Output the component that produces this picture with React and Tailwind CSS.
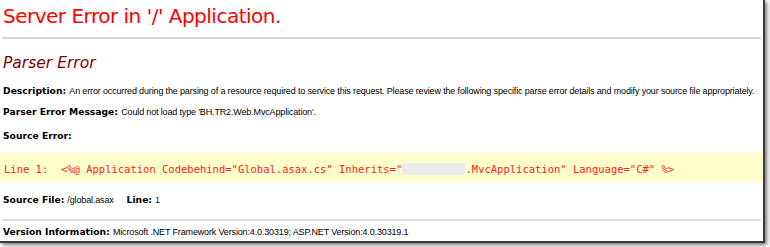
import React from 'react';

const verdana = "font-['DejaVu_Sans',Verdana,sans-serif]";
const arial = "font-['Liberation_Sans',Arial,sans-serif] text-[9px] tracking-[-0.15px]";

const Label = ({ children }) => (
  <b className={`${verdana} font-bold text-[9.2px] tracking-normal text-black`}>{children}</b>
);

const App = () => {
  return (
    <div className="w-[770px] h-[247px] bg-white">
      <div className="w-[765px] h-[243px] bg-white border-r-2 border-b-2 border-[#3a3a3a] shadow-[2px_2px_4px_rgba(0,0,0,0.55)] overflow-hidden">
        <h1 className={`${verdana} text-[20px] tracking-[-0.5px] leading-[22px] text-[#ff0000] pl-[3px] pt-[5px]`}>
          Server Error in '/' Application.
        </h1>
        <div className="h-[2px] bg-[#d6d6d6] mx-[2px] mt-[10px]" />

        <h2 className={`${verdana} italic text-[15.5px] leading-[18px] text-[#800000] pl-[3px] mt-[15px]`}>
          Parser Error
        </h2>

        <div className={`${arial} leading-[12px] text-black pl-[3px] mt-[13px] whitespace-nowrap`}>
          <Label>Description: </Label>
          An error occurred during the parsing of a resource required to service this request. Please review the following specific parse error details and modify your source file appropriately.
        </div>

        <div className={`${arial} leading-[12px] text-black pl-[3px] mt-[9px] whitespace-nowrap`}>
          <Label>Parser Error Message: </Label>
          Could not load type 'BH.TR2.Web.MvcApplication'.
        </div>

        <div className="leading-[12px] pl-[3px] mt-[9px]">
          <Label>Source Error:</Label>
        </div>

        <div className="bg-[#ffffcc] h-[29px] mt-[11px] pl-[4px] pt-[10px]">
          <pre className="font-['DejaVu_Sans_Mono',Consolas,monospace] text-[10.5px] leading-[13px] text-[#ff2020]">
            Line 1:  &lt;%@ Application Codebehind="Global.asax.cs" Inherits="<span className="bg-[#ececec]">{'          '}</span>.MvcApplication" Language="C#" %&gt;
          </pre>
        </div>

        <div className={`${arial} leading-[12px] text-black pl-[3px] mt-[12px] flex items-baseline whitespace-nowrap`}>
          <Label>Source File:</Label>
          <span className="ml-[3px]">/global.asax</span>
          <span className="ml-[13px]"><Label>Line:</Label></span>
          <span className="ml-[3px] text-[#1a1a2e]">1</span>
        </div>

        <div className="h-[2px] bg-[#dcdcdc] mx-[2px] mt-[13px]" />

        <div className={`${arial} leading-[12px] text-black pl-[3px] mt-[5px] whitespace-nowrap`}>
          <Label>Version Information: </Label>
          Microsoft .NET Framework Version:4.0.30319; ASP.NET Version:4.0.30319.1
        </div>
      </div>
    </div>
  );
};

export default App;
